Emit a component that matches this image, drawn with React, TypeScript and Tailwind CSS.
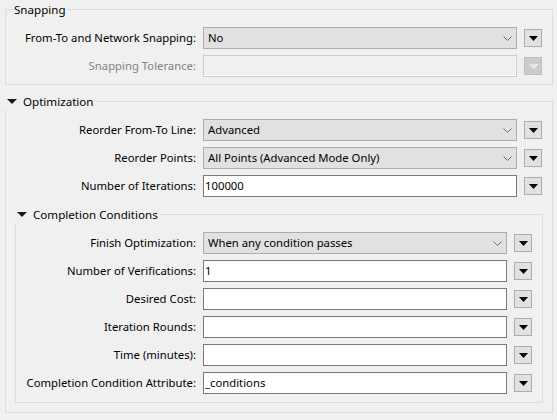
import React from "react"

type Field =
  | { kind: "combo"; label: string; value: string }
  | { kind: "text"; label: string; value: string }
  | { kind: "disabled"; label: string }

const SNAPPING: Field[] = [
  { kind: "combo", label: "From-To and Network Snapping:", value: "No" },
  { kind: "disabled", label: "Snapping Tolerance:" },
]

const OPTIMIZATION: Field[] = [
  { kind: "combo", label: "Reorder From-To Line:", value: "Advanced" },
  { kind: "combo", label: "Reorder Points:", value: "All Points (Advanced Mode Only)" },
  { kind: "text", label: "Number of Iterations:", value: "100000" },
]

const COMPLETION: Field[] = [
  { kind: "combo", label: "Finish Optimization:", value: "When any condition passes" },
  { kind: "text", label: "Number of Verifications:", value: "1" },
  { kind: "text", label: "Desired Cost:", value: "" },
  { kind: "text", label: "Iteration Rounds:", value: "" },
  { kind: "text", label: "Time (minutes):", value: "" },
  { kind: "text", label: "Completion Condition Attribute:", value: "_conditions" },
]

function MenuButton({ disabled }: { disabled?: boolean }) {
  if (disabled) {
    return (
      <div className="w-[18px] h-[18px] shrink-0 border border-[#bfbfbf] bg-[#cccccc] flex items-center justify-center">
        <svg width="9" height="5" viewBox="0 0 9 5" shapeRendering="crispEdges">
          <path d="M0 0H9L4.5 5Z" fill="#e4e4e4" />
          <path d="M8.5 0.5L4.5 4.5" stroke="#ffffff" strokeWidth="1" />
        </svg>
      </div>
    )
  }
  return (
    <div className="w-[18px] h-[18px] shrink-0 border border-[#adadad] bg-[#e1e1e1] flex items-center justify-center">
      <svg width="9" height="5" viewBox="0 0 9 5">
        <path d="M0 0H9L4.5 5Z" fill="#000000" />
      </svg>
    </div>
  )
}

function Row({ field, labelWidth }: { field: Field; labelWidth: string }) {
  const disabled = field.kind === "disabled"
  return (
    <div className="flex items-center h-[22px] gap-[7px]">
      <span
        className={`${labelWidth} shrink-0 text-right leading-[16px] whitespace-nowrap ${
          disabled ? "text-[#838383]" : "text-black"
        }`}
      >
        {field.label}
      </span>
      {field.kind === "combo" && (
        <div className="flex-1 h-[22px] border border-[#adadad] bg-[#e1e1e1] flex items-center pl-[4px] pr-[4px]">
          <span className="flex-1 leading-[16px] whitespace-nowrap overflow-hidden">{field.value}</span>
          <svg width="9" height="5" viewBox="0 0 9 5" className="shrink-0">
            <path d="M0.5 0.5L4.5 4.5L8.5 0.5" fill="none" stroke="#707070" strokeWidth="1" />
          </svg>
        </div>
      )}
      {field.kind === "text" && (
        <div className="flex-1 h-[22px] border border-[#7a7a7a] bg-white flex items-center pl-[1px]">
          <span className="leading-[16px] whitespace-nowrap">{field.value}</span>
        </div>
      )}
      {field.kind === "disabled" && (
        <div className="flex-1 h-[22px] border border-[#cccccc] bg-[#f0f0f0] shadow-[inset_-1px_-1px_0_#ffffff]" />
      )}
      <MenuButton disabled={disabled} />
    </div>
  )
}

function Caret() {
  return (
    <svg width="10" height="5" viewBox="0 0 10 5" className="shrink-0">
      <path d="M0 0H10L5 5Z" fill="#1a1a1a" />
    </svg>
  )
}

export default function App() {
  return (
    <div className="w-[557px] h-[420px] bg-[#f0f0f0] overflow-hidden text-[11.3px] text-black font-['Noto_Sans',sans-serif] flow-root">
      {/* Snapping */}
      <fieldset className="mt-[1px] ml-[5px] mr-[4px] border border-[#dcdcdc] pt-[9px] pb-[7px] pr-[10px] flex flex-col gap-[6px]">
        <legend className="ml-[7px] px-[1px] leading-[17px] text-[11.6px]">Snapping</legend>
        {SNAPPING.map((f) => (
          <Row key={f.label} field={f} labelWidth="w-[190px]" />
        ))}
      </fieldset>

      {/* Optimization */}
      <fieldset className="mt-[8px] ml-[5px] mr-[4px] border border-[#dcdcdc] pt-[9px] pb-[9px]">
        <legend className="-ml-[2px] pl-[3px] pr-[2px] leading-[17px] text-[11.6px] flex items-center gap-[6px]">
          <Caret />
          <span>Optimization</span>
        </legend>
        <div className="pr-[10px] flex flex-col gap-[6px]">
          {OPTIMIZATION.map((f) => (
            <Row key={f.label} field={f} labelWidth="w-[190px]" />
          ))}
        </div>

        {/* Completion Conditions */}
        <fieldset className="mt-[9px] mx-[9px] border border-[#dcdcdc] pt-[9px] pb-[8px] pr-[10px] flex flex-col gap-[6px]">
          <legend className="-ml-[2px] pl-[3px] pr-[2px] leading-[17px] text-[11.6px] flex items-center gap-[6px]">
            <Caret />
            <span>Completion Conditions</span>
          </legend>
          {COMPLETION.map((f) => (
            <Row key={f.label} field={f} labelWidth="w-[180px]" />
          ))}
        </fieldset>
      </fieldset>
    </div>
  )
}
